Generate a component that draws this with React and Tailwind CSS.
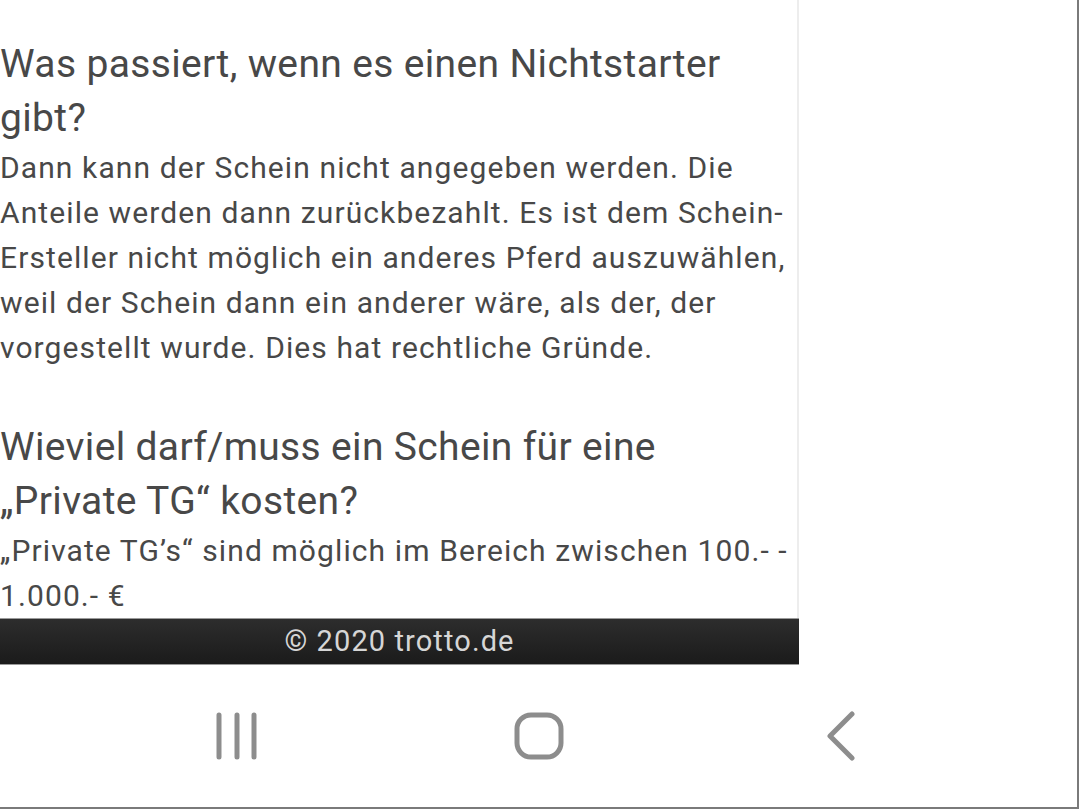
import React from "react"

const FAQ = [
  {
    q: "Was passiert, wenn es einen Nichtstarter gibt?",
    a: "Dann kann der Schein nicht angegeben werden. Die Anteile werden dann zurückbezahlt. Es ist dem Schein-Ersteller nicht möglich ein anderes Pferd auszuwählen, weil der Schein dann ein anderer wäre, als der, der vorgestellt wurde. Dies hat rechtliche Gründe."
  },
  {
    q: "Wieviel darf/muss ein Schein für eine „Private TG“ kosten?",
    a: "„Private TG’s“ sind möglich im Bereich zwischen 100.- - 1.000.- €"
  }
]

function NavIcons() {
  return (
    <div className="flex h-[142px] items-center justify-center gap-[242px]">
      <div className="flex w-[60px] justify-center">
        <svg width="46" height="48" viewBox="0 0 46 48" fill="none" stroke="#8d8d8d" strokeWidth="5" strokeLinecap="round">
          <path d="M5 3v42M23 3v42M40 3v42" />
        </svg>
      </div>
      <div className="flex w-[60px] justify-center">
        <svg width="50" height="48" viewBox="0 0 50 48" fill="none" stroke="#8d8d8d" strokeWidth="5">
          <rect x="3" y="3" width="44" height="42" rx="14" />
        </svg>
      </div>
      <div className="flex w-[60px] justify-center">
        <svg width="32" height="50" viewBox="0 0 32 50" fill="none" stroke="#8d8d8d" strokeWidth="5" strokeLinecap="round" strokeLinejoin="round">
          <path d="M27 3L5 25l22 22" />
        </svg>
      </div>
    </div>
  )
}

export default function App() {
  return (
    <div className="flex h-[809px] w-[1079px] flex-col overflow-hidden border-r-2 border-b-2 border-[#7a7a7a] bg-white font-['Roboto',sans-serif] text-[#484848]">

      <div className="flex h-[618px] overflow-hidden">
        <div className="w-[799px] border-r-2 border-[#ededed]">
          <div className="pt-[37px]">
            {FAQ.map((f, i) => (
              <div key={i} className={i > 0 ? "mt-[50px]" : ""}>
                <h2 className="text-[39px] leading-[54px] font-normal tracking-[0.35px]">{f.q}</h2>
                <p className="text-[30px] leading-[45px] tracking-[1.1px]">{f.a}</p>
              </div>
            ))}
          </div>
        </div>
      </div>

      {/* footer */}
      <div className="h-[47px] w-[799px] border-y border-[#9a9a9a] bg-gradient-to-b from-[#2d2d2d] to-[#1b1b1b] text-center text-[29px] leading-[45px] tracking-[1.1px] text-[#d6d6d6]">
        © 2020 trotto.de
      </div>

      <NavIcons />

    </div>
  )
}
